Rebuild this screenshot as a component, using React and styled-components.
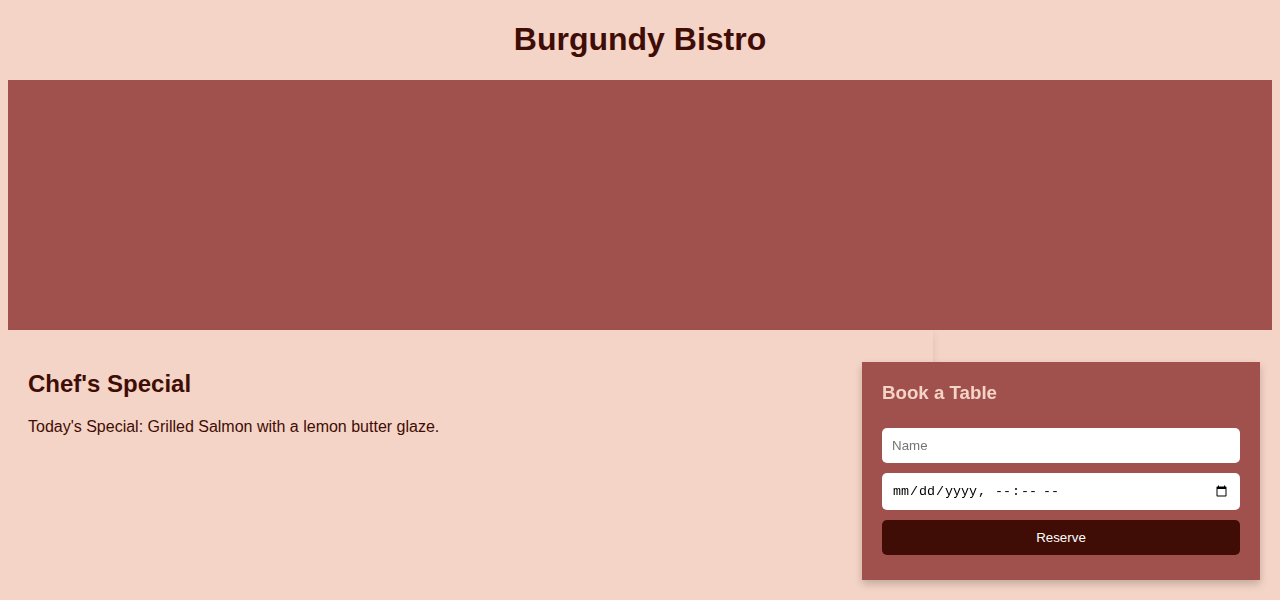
import React from "react";
import styled, { createGlobalStyle } from "styled-components";

const GlobalStyle = createGlobalStyle`
  body {
    margin: 8px;
    background-color: #f4d4c6;
    color: #3f0d05;
    font-family: "Liberation Sans", Arial, sans-serif;
  }
`;

const Header = styled.header`
  text-align: center;
`;

const Title = styled.h1`
  font-size: 32px;
  margin: 13.44px 0 21.44px;
  color: #3f0d05;
`;

const Hero = styled.div`
  height: 250px;
  background-color: #a0514d;
`;

const SpecialCard = styled.div`
  width: 70%;
  padding: 20px;
  background-color: #f4d4c6;
  box-shadow: 0 4px 8px rgba(0, 0, 0, 0.1);

  h2 {
    font-size: 24px;
    margin: 0.83em 0;
  }

  p {
    font-size: 16px;
    margin: 16px 0;
  }
`;

const BookingPanel = styled.aside`
  position: fixed;
  right: 20px;
  bottom: 20px;
  width: 358px;
  padding: 20px;
  background-color: #a0514d;
  box-shadow: 0 4px 8px rgba(0, 0, 0, 0.2);

  h3 {
    margin: 0 0 18.72px;
    font-size: 18.72px;
    color: #f4d4c6;
  }
`;

const BookingForm = styled.form`
  display: flex;
  flex-direction: column;
  gap: 10px;
  padding: 5px 0;
`;

const Field = styled.input`
  display: block;
  width: 100%;
  box-sizing: border-box;
  margin: 0;
  padding: 10px;
  border: none;
  border-radius: 5px;
  background: #fff;
  font-family: "Liberation Sans", Arial, sans-serif;
  font-size: 13.33px;

  &[type="datetime-local"] {
    font-family: "Liberation Mono", monospace;
  }
`;

const ReserveButton = styled.button`
  display: block;
  width: 100%;
  margin: 0;
  padding: 10px;
  border: none;
  border-radius: 5px;
  background-color: #3f0d05;
  color: #fff;
  font-family: "Liberation Sans", Arial, sans-serif;
  font-size: 13.33px;
  cursor: pointer;
`;

export default function App() {
  return (
    <>
      <GlobalStyle />
      <Header>
        <Title>Burgundy Bistro</Title>
      </Header>
      <Hero />
      <SpecialCard>
        <h2>Chef's Special</h2>
        <p>Today's Special: Grilled Salmon with a lemon butter glaze.</p>
      </SpecialCard>
      <BookingPanel>
        <h3>Book a Table</h3>
        <BookingForm onSubmit={(e) => e.preventDefault()}>
          <Field type="text" placeholder="Name" />
          <Field type="datetime-local" />
          <ReserveButton type="submit">Reserve</ReserveButton>
        </BookingForm>
      </BookingPanel>
    </>
  );
}
